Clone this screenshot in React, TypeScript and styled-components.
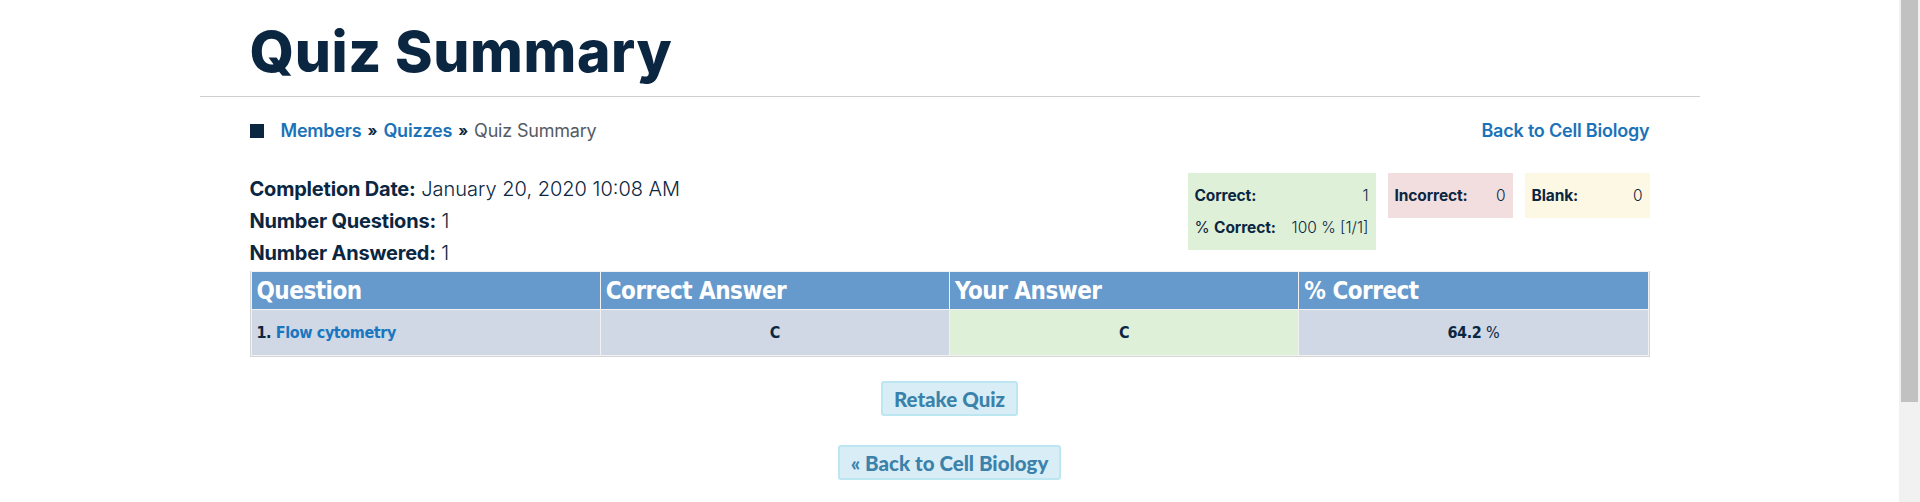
import React from "react";
import styled, { createGlobalStyle } from "styled-components";

const GlobalStyle = createGlobalStyle`
  html, body {
    margin: 0;
    padding: 0;
    background: #ffffff;
    overflow: hidden;
  }
  body {
    font-family: Inter, "Liberation Sans", sans-serif;
    color: #0b2540;
  }
`;

const Page = styled.div`
  display: flex;
  width: 1920px;
  height: 502px;
`;

const Main = styled.main`
  flex: 1;
  display: flex;
  justify-content: center;
`;

const ScrollTrack = styled.div`
  width: 21px;
  background: #f1f1f1;
  display: flex;
  justify-content: center;
`;

const ScrollThumb = styled.div`
  width: 17px;
  height: 402px;
  background: #c1c1c1;
`;

const Container = styled.div`
  width: 1500px;
`;

const TitleBlock = styled.header`
  padding: 18px 50px 10px;
  border-bottom: 1px solid #cfcfcf;
`;

const Title = styled.h1`
  margin: 0;
  font-family: Inter, "Liberation Sans", sans-serif;
  font-weight: 800;
  font-size: 57px;
  line-height: 68px;
  letter-spacing: 0.6px;
  color: #0b2641;
`;

const Content = styled.div`
  padding: 22px 50px 0;
`;

const CrumbBar = styled.div`
  display: flex;
  justify-content: space-between;
  align-items: center;
  height: 24px;
  font-size: 18px;
  line-height: 24px;
`;

const Crumbs = styled.nav`
  display: flex;
  align-items: center;
  gap: 6px;
`;

const CrumbSquare = styled.span`
  width: 14px;
  height: 14px;
  background: #0b2641;
  margin-right: 11px;
`;

const Link = styled.a`
  color: #1a72b8;
  font-weight: 600;
  text-decoration: none;
  letter-spacing: -0.2px;
`;

const Sep = styled.span`
  color: #0b2641;
  font-weight: 700;
  font-size: 15px;
`;

const CrumbCurrent = styled.span`
  color: #555b63;
  font-weight: 400;
  letter-spacing: -0.2px;
`;

const InfoRow = styled.section`
  display: flex;
  justify-content: space-between;
  align-items: flex-start;
  margin-top: 30px;
`;

const InfoList = styled.div`
  display: flex;
  flex-direction: column;
`;

const InfoLine = styled.div`
  font-size: 20px;
  line-height: 32px;
  letter-spacing: 0;
  color: #0b2641;
`;

const InfoLabel = styled.strong`
  font-weight: 700;
  letter-spacing: -0.2px;
`;

const InfoValue = styled.span`
  font-weight: 300;
`;

const StatBoxes = styled.div`
  display: flex;
  align-items: flex-start;
  gap: 12px;
`;

const StatBox = styled.div<{ $bg: string; $w: number }>`
  width: ${(p) => p.$w}px;
  box-sizing: border-box;
  padding: 6px 7px 7px;
  background: ${(p) => p.$bg};
`;

const StatLine = styled.div`
  display: flex;
  justify-content: space-between;
  height: 32px;
  align-items: center;
  font-size: 15.5px;
  color: #0b2641;
`;

const StatLabel = styled.span`
  font-weight: 700;
  letter-spacing: -0.1px;
`;

const StatLabelPlain = styled.span`
  font-weight: 400;
`;

const StatValue = styled.span`
  font-weight: 300;
`;

const Table = styled.table`
  width: 100%;
  margin-top: 2px;
  border-collapse: separate;
  border-spacing: 1px;
  background: #f2f2f2;
  border: 1px solid #d6d6d6;
  border-top: none;
  font-family: "Liberation Sans Narrow", "DejaVu Sans Condensed", "Liberation Sans", sans-serif;
  table-layout: fixed;
`;

const Th = styled.th`
  height: 37px;
  padding: 0 5px;
  background: #6699cc;
  color: #ffffff;
  text-align: left;
  font-size: 24px;
  font-weight: 700;
  letter-spacing: -0.5px;
`;

const Td = styled.td<{ $bg?: string; $center?: boolean }>`
  height: 45px;
  padding: 0 5px;
  background: ${(p) => p.$bg || "#d0d8e6"};
  text-align: ${(p) => (p.$center ? "center" : "left")};
  font-size: 16px;
  font-weight: 700;
  letter-spacing: -0.4px;
  color: #0b2641;
`;

const QLink = styled.a`
  color: #1877c0;
  text-decoration: none;
  font-weight: 700;
`;

const Light = styled.span`
  font-weight: 400;
`;

const Actions = styled.div`
  display: flex;
  flex-direction: column;
  align-items: center;
  gap: 29px;
  margin-top: 24px;
`;

const Button = styled.a`
  display: inline-flex;
  align-items: center;
  height: 35px;
  box-sizing: border-box;
  padding: 0 11px;
  background: #d9edf7;
  border: 2px solid #bce6f1;
  border-radius: 3px;
  color: #3b82ab;
  font-family: Lato, "Liberation Sans", sans-serif;
  font-weight: 900;
  font-size: 20.5px;
  text-decoration: none;
`;

export default function App() {
  return (
    <Page>
      <GlobalStyle />
      <Main>
        <Container>
          <TitleBlock>
            <Title>Quiz Summary</Title>
          </TitleBlock>
          <Content>
            <CrumbBar>
              <Crumbs>
                <CrumbSquare />
                <Link href="#">Members</Link>
                <Sep>»</Sep>
                <Link href="#">Quizzes</Link>
                <Sep>»</Sep>
                <CrumbCurrent>Quiz Summary</CrumbCurrent>
              </Crumbs>
              <Link href="#">Back to Cell Biology</Link>
            </CrumbBar>

            <InfoRow>
              <InfoList>
                <InfoLine>
                  <InfoLabel>Completion Date:</InfoLabel> <InfoValue>January 20, 2020 10:08 AM</InfoValue>
                </InfoLine>
                <InfoLine>
                  <InfoLabel>Number Questions:</InfoLabel> <InfoValue>1</InfoValue>
                </InfoLine>
                <InfoLine>
                  <InfoLabel>Number Answered:</InfoLabel> <InfoValue>1</InfoValue>
                </InfoLine>
              </InfoList>
              <StatBoxes>
                <StatBox $bg="#dff0d8" $w={188}>
                  <StatLine>
                    <StatLabel>Correct:</StatLabel>
                    <StatValue>1</StatValue>
                  </StatLine>
                  <StatLine>
                    <span>
                      <StatLabelPlain>% </StatLabelPlain>
                      <StatLabel>Correct:</StatLabel>
                    </span>
                    <StatValue>100 % [1/1]</StatValue>
                  </StatLine>
                </StatBox>
                <StatBox $bg="#f2dede" $w={125}>
                  <StatLine>
                    <StatLabel>Incorrect:</StatLabel>
                    <StatValue>0</StatValue>
                  </StatLine>
                </StatBox>
                <StatBox $bg="#fcf8e3" $w={125}>
                  <StatLine>
                    <StatLabel>Blank:</StatLabel>
                    <StatValue>0</StatValue>
                  </StatLine>
                </StatBox>
              </StatBoxes>
            </InfoRow>

            <Table>
              <thead>
                <tr>
                  <Th>Question</Th>
                  <Th>Correct Answer</Th>
                  <Th>Your Answer</Th>
                  <Th>% Correct</Th>
                </tr>
              </thead>
              <tbody>
                <tr>
                  <Td>
                    1. <QLink href="#">Flow cytometry</QLink>
                  </Td>
                  <Td $center>C</Td>
                  <Td $center $bg="#dff0d8">C</Td>
                  <Td $center>
                    64.2 <Light>%</Light>
                  </Td>
                </tr>
              </tbody>
            </Table>

            <Actions>
              <Button href="#">Retake Quiz</Button>
              <Button href="#">« Back to Cell Biology</Button>
            </Actions>
          </Content>
        </Container>
      </Main>
      <ScrollTrack>
        <ScrollThumb />
      </ScrollTrack>
    </Page>
  );
}
